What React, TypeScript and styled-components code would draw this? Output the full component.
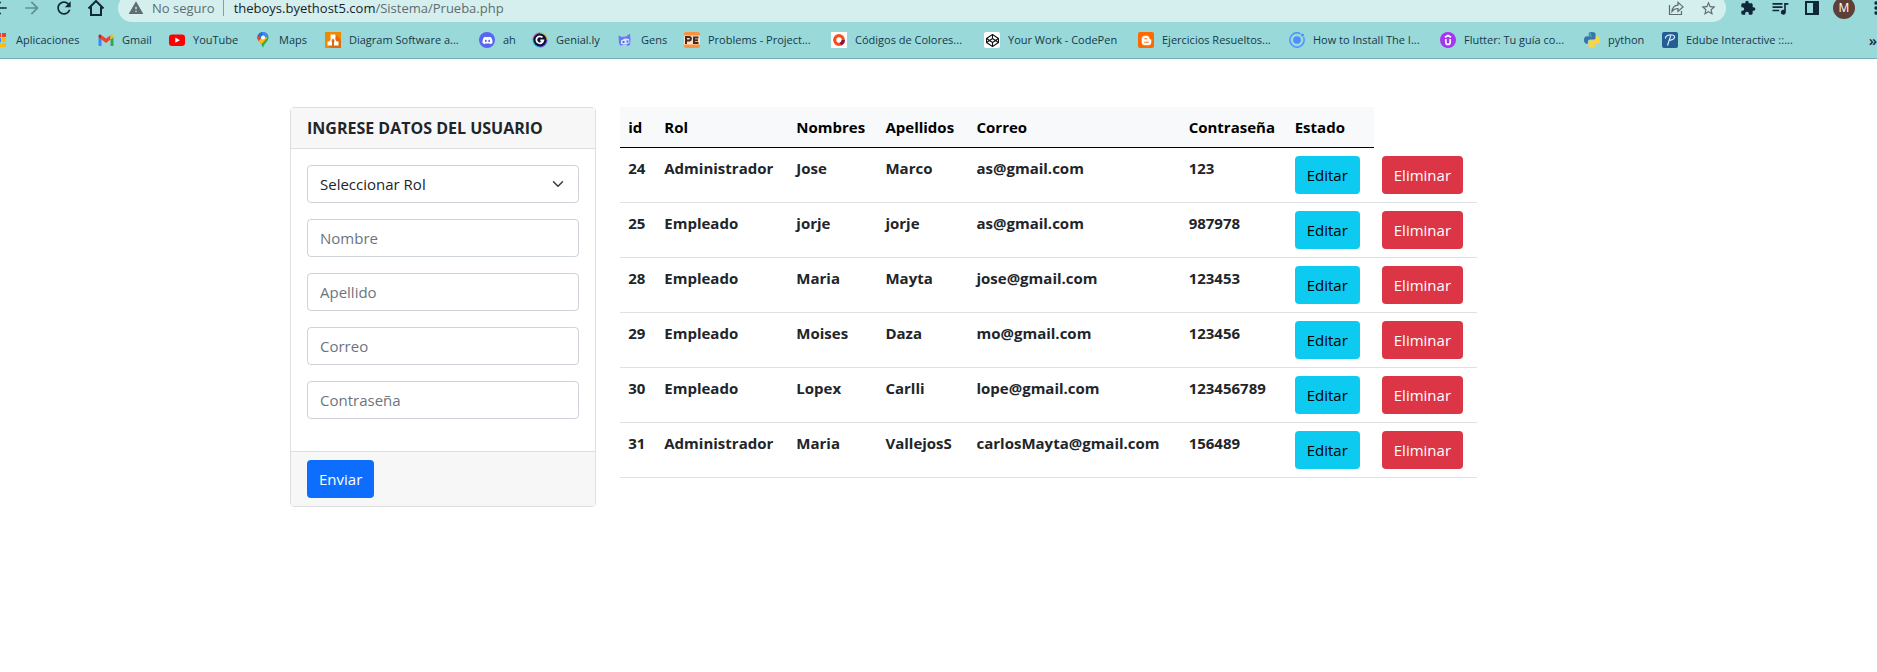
import React from 'react';
import styled, { createGlobalStyle } from 'styled-components';
import { FaDiscord, FaCodepen, FaBloggerB } from 'react-icons/fa';

const GlobalStyle = createGlobalStyle`
  *, *::before, *::after { box-sizing: border-box; }
  body {
    margin: 0;
    background: #fff;
    color: #212529;
    font-family: "Open Sans", "Noto Sans", sans-serif;
    font-size: 15px;
    line-height: 24px;
    overflow-x: hidden;
  }
  button, input, select { font: inherit; }
`;

/* ---------- browser bars ---------- */

const Chrome = styled.header`
  background: #9ad9d9;
  border-bottom: 1px solid #74b0b4;
  overflow: hidden;
`;

const Toolbar = styled.div`
  display: flex;
  align-items: center;
  height: 28px;
  margin: -6px -15px 0 -16px;
`;

const IconButton = styled.button<{ $dim?: boolean }>`
  display: flex;
  align-items: center;
  justify-content: center;
  flex: none;
  width: 32px;
  height: 28px;
  padding: 0;
  border: 0;
  background: none;
  color: ${(p) => (p.$dim ? '#5f9095' : '#10273a')};
`;

const AddressBar = styled.div`
  display: flex;
  align-items: center;
  flex: 1;
  height: 28px;
  margin: 0 6px;
  padding: 0 2px 0 10px;
  border-radius: 14px;
  background: #d4efee;
  color: #5d6d70;
  font-size: 13px;
  line-height: 16px;
  & > button { color: #5d6d70; }
`;

const Security = styled.span`
  padding: 0 8px;
`;

const Divider = styled.span`
  width: 1px;
  height: 16px;
  margin-right: 10px;
  background: #8b9c9e;
`;

const Url = styled.span`
  flex: 1;
`;

const Host = styled.span`
  color: #14232a;
`;

const Avatar = styled.span`
  display: flex;
  align-items: center;
  justify-content: center;
  width: 22px;
  height: 22px;
  border-radius: 50%;
  background: #5d4037;
  color: #fff;
  font-size: 12px;
  line-height: 16px;
`;

const Bookmarks = styled.nav`
  display: flex;
  align-items: center;
  height: 36px;
  margin-left: -8px;
  font-size: 11px;
  line-height: 16px;
`;

const Bookmark = styled.a<{ $width: number }>`
  display: flex;
  align-items: center;
  gap: 8px;
  flex: none;
  width: ${(p) => p.$width}px;
  color: #14384a;
  text-decoration: none;
  white-space: nowrap;
`;

const More = styled.button`
  flex: none;
  width: 16px;
  margin-left: auto;
  padding: 0;
  border: 0;
  background: none;
  color: #10273a;
  font-size: 15px;
  font-weight: 600;
  text-align: right;
`;

/* ---------- page ---------- */

const Container = styled.main`
  display: grid;
  grid-template-columns: 3fr 8fr 1fr;
  max-width: 1321px;
  margin: 48px auto 0;
`;

const Column = styled.div`
  min-width: 0;
  padding: 0 12px;
`;

const Card = styled.form`
  border: 1px solid #dfdfdf;
  border-radius: 4px;
`;

const CardHeader = styled.h1`
  margin: 0;
  padding: 8px 16px;
  border-bottom: 1px solid #dfdfdf;
  background: #f7f7f7;
  font-size: 16px;
  font-weight: 700;
  line-height: 24px;
`;

const CardBody = styled.div`
  display: grid;
  gap: 16px;
  padding: 16px 16px 32px;
`;

const CardFooter = styled.div`
  padding: 8px 16px;
  border-top: 1px solid #dfdfdf;
  background: #f7f7f7;
`;

const Field = styled.input`
  width: 100%;
  height: 38px;
  padding: 6px 12px;
  border: 1px solid #ced4da;
  border-radius: 4px;
  background: #fff;
  color: #212529;
  &::placeholder { color: #6c757d; opacity: 1; }
`;

const SelectBox = styled.div`
  display: grid;
  align-items: center;
  & > * { grid-area: 1 / 1; }
  & > svg { justify-self: end; margin-right: 13px; pointer-events: none; }
`;

const Select = styled(Field).attrs({ as: 'select' })`
  appearance: none;
`;

const tones = {
  primary: ['#0d6efd', '#fff'],
  info: ['#0dcaf0', '#000'],
  danger: ['#dc3545', '#fff'],
};

const Button = styled.button<{ $tone: keyof typeof tones }>`
  display: block;
  height: 38px;
  padding: 0 12px;
  border: 0;
  border-radius: 4px;
  background: ${(p) => tones[p.$tone][0]};
  color: ${(p) => tones[p.$tone][1]};
`;

const Table = styled.table`
  width: 100%;
  table-layout: fixed;
  border-collapse: separate;
  border-spacing: 0;
  text-align: left;
`;

const Col = styled.col<{ $width: number }>`
  width: ${(p) => p.$width}px;
`;

const HeadCell = styled.th`
  padding: 8px;
  border-bottom: 1px solid #000;
  background: #f8f9fa;
  color: #000;
`;

const Cell = styled.td`
  padding: 8px;
  border-bottom: 1px solid #dee2e6;
  font-weight: 700;
  vertical-align: top;
  white-space: nowrap;
  & > button { font-weight: 400; }
`;

/* ---------- icons ---------- */

const Glyph = ({ d, size = 20 }: { d: string; size?: number }) => (
  <svg width={size} height={size} viewBox="0 0 24 24" fill="currentColor"><path d={d} /></svg>
);

const Icon16 = ({ children }: { children: React.ReactNode }) => (
  <svg width="16" height="16" viewBox="0 0 16 16" fill="none">{children}</svg>
);

const HomeIcon = () => (
  <svg width="18" height="18" viewBox="0 0 18 18" fill="none" stroke="currentColor" strokeWidth="2">
    <path d="M1.500 9.500 9 2l7.500 7.500M4 8v8h10V8" />
  </svg>
);

const ShareIcon = () => (
  <svg width="16" height="16" viewBox="0 0 16 16" fill="none" stroke="currentColor" strokeWidth="1.200">
    <path d="M1.500 5v9.500h12V11" />
    <path d="M4 11.500C4.300 7.500 6.500 5.300 10 5.100V2.300l5 4.600-5 4.500V8.500c-2.700 0-4.500.900-6 3Z" />
  </svg>
);

const PanelIcon = () => (
  <svg width="14" height="14" viewBox="0 0 14 14"><path fill="currentColor" fillRule="evenodd" d="M0 0h14v14H0zM2 2v10h6V2z" /></svg>
);

const Chevron = () => (
  <svg width="16" height="12" viewBox="0 0 16 16" fill="none" stroke="#343a40" strokeWidth="2" strokeLinecap="round" strokeLinejoin="round">
    <path d="m2 5 6 6 6-6" />
  </svg>
);

const AppsIcon = () => (
  <Icon16>
    {['#4285f4', '#ea4335', '#ea4335', '#34a853', '#4285f4', '#fbbc04', '#34a853', '#fbbc04', '#fbbc04'].map((c, i) => (
      <rect key={i} x={Math.floor(i % 3) * 5} y={1 + Math.floor(i / 3) * 5} width="4" height="4" fill={c} />
    ))}
  </Icon16>
);

const GmailIcon = () => (
  <Icon16>
    <path fill="#4285f4" d="M1 14h2.500V7.500L.500 5.200V13c0 .600.300 1 .500 1Z" />
    <path fill="#34a853" d="M12.500 14H15c.400 0 .500-.500.500-1V5.200l-3 2.300Z" />
    <path fill="#ea4335" d="M3.500 7.500V3.200L8 6.600l4.500-3.400v4.300L8 11Z" />
    <path fill="#fbbc04" d="M12.500 3.200v4.300l3-2.300V4c0-1.600-1.700-2.100-3-.800Z" />
    <path fill="#c5221f" d="M.500 4v1.200l3 2.300V3.200C2.200 1.900.500 2.400.500 4Z" />
  </Icon16>
);

const YouTubeIcon = () => (
  <Icon16>
    <rect y="2.500" width="16" height="11.500" rx="3" fill="#f00" />
    <path d="m6.300 5.600 4.600 2.600-4.600 2.600Z" fill="#fff" />
  </Icon16>
);

const MapsIcon = () => (
  <Icon16>
    <clipPath id="pin"><path d="M8 0C4.800 0 2.500 2.400 2.500 5.500c0 4 4.200 5.300 5.500 10.500 1.300-5.200 5.500-6.500 5.500-10.500C13.500 2.400 11.200 0 8 0Z" /></clipPath>
    <g clipPath="url(#pin)">
      <path fill="#34a853" d="M0 0h16v16H0z" />
      <path fill="#fbbc04" d="M0 11 9.500 0 12 6 5 14Z" />
      <path fill="#1a73e8" d="M0 0h8L8 4 3 9.500H0Z" />
      <path fill="#ea4335" d="M2 2 6 6l-3.500 4L0 7Z" />
      <path fill="#4285f4" d="M7 0h8v3L9 6Z" />
    </g>
    <circle cx="8" cy="5.500" r="2" fill="#fff" />
  </Icon16>
);

const DiagramIcon = () => (
  <Icon16>
    <path fill="#f08705" d="M0 0h16v16H0z" />
    <path fill="#df6c0c" d="m10 2 6 6v8H6l-3-3Z" />
    <path d="M8 4.500 4.500 11M8 4.500l3.500 6.500" stroke="#fff" strokeWidth="1.500" />
    <path fill="#fff" d="M5.500 2.500h5v4h-5zM2.500 9.500H7v4H2.500zM9 9.500h4.500v4H9z" />
  </Icon16>
);

const Tile = styled.span<{ $bg: string; $fg: string; $round?: boolean }>`
  display: flex;
  align-items: center;
  justify-content: center;
  width: 16px;
  height: 16px;
  border-radius: ${(p) => (p.$round ? '50%' : '2px')};
  background: ${(p) => p.$bg};
  color: ${(p) => p.$fg};
`;

const GeniallyIcon = () => (
  <Icon16>
    <circle cx="8" cy="8" r="7.500" fill="#1fb5d8" />
    <path d="M8 8V.500A7.500 7.500 0 0 1 15.500 8Z" fill="#f9b52c" />
    <path d="M8 8h7.500A7.500 7.500 0 0 1 8 15.500Z" fill="#7b5cf0" />
    <path d="M.500 8A7.500 7.500 0 0 1 8 .500V8Z" fill="#d94b9b" />
    <circle cx="8" cy="8" r="6.500" fill="#0b1135" />
    <path d="M10.500 5.500A3.500 3.500 0 1 0 11.300 8.500H8.300" stroke="#fff" strokeWidth="1.800" />
  </Icon16>
);

const GensIcon = () => (
  <Icon16>
    <path fill="#6a78f5" d="M1.500 3.500 5 5l4-.500L13 1.500l.500 6L13 13l-2.500 1-1-1.500H6l-2.500 1.500L2 11Z" />
    <path fill="#dce4ff" d="m4 8.500 4-2 4 .500.500 4-4 1.500-4.500-.500Z" />
    <path fill="#5865f2" d="M5.500 9h2v2h-2zM9.500 8.500h2v2h-2z" />
  </Icon16>
);

const ProblemsIcon = () => (
  <Icon16>
    <rect width="16" height="16" rx="2" fill="#f9923e" />
    <path fill="#f3e3cf" d="M0 3.500h16v9H0z" />
    <path d="M2 12V5h3.200c2.200 0 2.200 3.500 0 3.500H2.500M14.500 5.500H10v5.500h4.500M10 8.200h4" stroke="#4b2a1c" strokeWidth="2" />
  </Icon16>
);

const CodigosIcon = () => (
  <Icon16>
    <path fill="#fff" d="M0 0h16v16H0z" />
    <circle cx="8" cy="8" r="4.300" stroke="#f4511e" strokeWidth="3.200" />
    <path d="M12.300 8A4.300 4.300 0 0 1 9.500 12" stroke="#8e1440" strokeWidth="3.200" />
  </Icon16>
);

const IonicIcon = () => (
  <Icon16>
    <circle cx="8" cy="8" r="7.200" stroke="#4c8dff" strokeWidth="1.400" />
    <circle cx="8" cy="8" r="3.800" fill="#4c8dff" />
    <circle cx="13.500" cy="3" r="2.400" fill="#9ad9d9" />
    <circle cx="13.500" cy="3" r="1.500" fill="#4c8dff" />
  </Icon16>
);

const UdemyIcon = () => (
  <Icon16>
    <circle cx="8" cy="8" r="8" fill="#a435f0" />
    <path d="M5.800 7v3.200c0 3 4.400 3 4.400 0V7M5 5.200l3-1.800 3 1.800" stroke="#fff" strokeWidth="1.700" />
  </Icon16>
);

const PythonIcon = () => (
  <Icon16>
    <path fill="#3776ab" d="M8 0C4.500 0 4.700 1.500 4.700 2.200v1.500H8.200v.600H2.600C1.200 4.300 0 5.500 0 8.100s1.200 3.600 2.500 3.600h1.400V9.800c0-1.300 1-2.200 2.200-2.200h3.500c1.100 0 1.900-.900 1.900-1.900V2.200C11.500.900 10.300 0 8 0ZM6.200 1.200a.700.700 0 1 1 0 1.400.700.700 0 0 1 0-1.400Z" />
    <path fill="#ffd43b" d="M8 16c3.500 0 3.300-1.500 3.300-2.200v-1.500H7.800v-.600h5.600c1.400 0 2.600-1.200 2.600-3.800s-1.200-3.600-2.500-3.600h-1.400v1.900c0 1.300-1 2.200-2.200 2.200H6.400c-1.100 0-1.900.900-1.900 1.900v3.500C4.500 15.100 5.700 16 8 16Zm1.800-1.200a.700.700 0 1 1 0-1.400.700.700 0 0 1 0 1.400Z" />
  </Icon16>
);

const EdubeIcon = () => (
  <Icon16>
    <rect width="16" height="16" rx="2" fill="#235d93" />
    <path d="M3.500 6.500C3 3.500 7 2.800 10 3c4 .300 3.200 4.500-1.500 5.200M8.800 3.500 5.500 13.500M6.500 8.500l2.500-.300" stroke="#dcecf8" strokeWidth="1.200" />
  </Icon16>
);

const discord = <Tile $round $bg="#5865f2" $fg="#fff"><FaDiscord size={11} /></Tile>;
const codepen = <Tile $bg="#fff" $fg="#111"><FaCodepen size={13} /></Tile>;
const blogger = <Tile $bg="#ff6a00" $fg="#fff"><FaBloggerB size={11} /></Tile>;

/* ---------- data ---------- */

const bookmarks: [string, number, React.ReactNode][] = [
  ['Aplicaciones', 106, <AppsIcon />],
  ['Gmail', 71, <GmailIcon />],
  ['YouTube', 86, <YouTubeIcon />],
  ['Maps', 70, <MapsIcon />],
  ['Diagram Software a...', 154, <DiagramIcon />],
  ['ah', 53, discord],
  ['Genial.ly', 85, <GeniallyIcon />],
  ['Gens', 67, <GensIcon />],
  ['Problems - Project...', 147, <ProblemsIcon />],
  ['Códigos de Colores...', 153, <CodigosIcon />],
  ['Your Work - CodePen', 154, codepen],
  ['Ejercicios Resueltos...', 151, blogger],
  ['How to Install The I...', 151, <IonicIcon />],
  ['Flutter: Tu guía co...', 144, <UdemyIcon />],
  ['python', 78, <PythonIcon />],
  ['Edube Interactive ::...', 150, <EdubeIcon />],
];

const headings = ['id', 'Rol', 'Nombres', 'Apellidos', 'Correo', 'Contraseña', 'Estado'];
const columnWidths = [36, 132, 89, 91, 212, 106, 87, 103];

const users = [
  ['24', 'Administrador', 'Jose', 'Marco', 'as@gmail.com', '123'],
  ['25', 'Empleado', 'jorje', 'jorje', 'as@gmail.com', '987978'],
  ['28', 'Empleado', 'Maria', 'Mayta', 'jose@gmail.com', '123453'],
  ['29', 'Empleado', 'Moises', 'Daza', 'mo@gmail.com', '123456'],
  ['30', 'Empleado', 'Lopex', 'Carlli', 'lope@gmail.com', '123456789'],
  ['31', 'Administrador', 'Maria', 'VallejosS', 'carlosMayta@gmail.com', '156489'],
];

export default function App() {
  return (
    <>
      <GlobalStyle />
      <Chrome>
        <Toolbar>
          <IconButton aria-label="Atrás"><Glyph d="M20 11H7.830l5.590-5.590L12 4l-8 8 8 8 1.410-1.410L7.830 13H20v-2z" /></IconButton>
          <IconButton aria-label="Adelante" $dim><Glyph d="M12 4l-1.410 1.410L16.170 11H4v2h12.170l-5.580 5.590L12 20l8-8z" /></IconButton>
          <IconButton aria-label="Recargar"><Glyph d="M17.650 6.350C16.200 4.900 14.210 4 12 4c-4.420 0-7.990 3.580-7.990 8s3.570 8 7.990 8c3.730 0 6.840-2.550 7.730-6h-2.080c-.820 2.330-3.040 4-5.650 4-3.310 0-6-2.690-6-6s2.690-6 6-6c1.660 0 3.140.690 4.220 1.780L13 11h7V4l-2.350 2.350z" /></IconButton>
          <IconButton aria-label="Inicio"><HomeIcon /></IconButton>
          <AddressBar>
            <Glyph size={16} d="M1 21h22L12 2 1 21zm12-3h-2v-2h2v2zm0-4h-2v-4h2v4z" />
            <Security>No seguro</Security>
            <Divider />
            <Url><Host>theboys.byethost5.com</Host>/Sistema/Prueba.php</Url>
            <IconButton aria-label="Compartir"><ShareIcon /></IconButton>
            <IconButton aria-label="Añadir a marcadores"><Glyph size={17} d="M22 9.240l-7.190-.620L12 2 9.190 8.630 2 9.240l5.460 4.730L5.820 21 12 17.270 18.180 21l-1.630-7.030L22 9.240zM12 15.400l-3.760 2.270 1-4.280-3.320-2.880 4.380-.380L12 6.100l1.710 4.040 4.380.380-3.320 2.880 1 4.280L12 15.400z" /></IconButton>
          </AddressBar>
          <IconButton aria-label="Extensiones"><Glyph size={16} d="M20.500 11H19V7c0-1.100-.900-2-2-2h-4V3.500C13 2.120 11.880 1 10.500 1S8 2.120 8 3.500V5H4c-1.100 0-1.990.900-1.990 2v3.800H3.500c1.490 0 2.700 1.210 2.700 2.700s-1.210 2.700-2.700 2.700H2V20c0 1.100.900 2 2 2h3.800v-1.500c0-1.490 1.210-2.700 2.700-2.700 1.490 0 2.700 1.210 2.700 2.700V22H17c1.100 0 2-.900 2-2v-4h1.500c1.380 0 2.500-1.120 2.500-2.500S21.880 11 20.500 11z" /></IconButton>
          <IconButton aria-label="Multimedia"><Glyph d="M15 6H3v2h12V6zm0 4H3v2h12v-2zM3 16h8v-2H3v2zM17 6v8.180c-.310-.110-.650-.180-1-.180-1.660 0-3 1.340-3 3s1.340 3 3 3 3-1.340 3-3V8h3V6h-5z" /></IconButton>
          <IconButton aria-label="Panel lateral"><PanelIcon /></IconButton>
          <IconButton aria-label="Perfil"><Avatar>M</Avatar></IconButton>
          <IconButton aria-label="Menú"><Glyph d="M12 8a2 2 0 1 0 0-4 2 2 0 0 0 0 4zm0 2a2 2 0 1 0 0 4 2 2 0 0 0 0-4zm0 6a2 2 0 1 0 0 4 2 2 0 0 0 0-4z" /></IconButton>
        </Toolbar>
        <Bookmarks>
          {bookmarks.map(([label, width, icon]) => (
            <Bookmark key={label} href="#" $width={width}>{icon}{label}</Bookmark>
          ))}
          <More aria-label="Más marcadores">»</More>
        </Bookmarks>
      </Chrome>

      <Container>
        <Column>
          <Card onSubmit={(e: React.FormEvent) => e.preventDefault()}>
            <CardHeader>INGRESE DATOS DEL USUARIO</CardHeader>
            <CardBody>
              <SelectBox>
                <Select aria-label="Rol">
                  <option>Seleccionar Rol</option>
                  <option>Administrador</option>
                  <option>Empleado</option>
                </Select>
                <Chevron />
              </SelectBox>
              <Field aria-label="Nombre" placeholder="Nombre" />
              <Field aria-label="Apellido" placeholder="Apellido" />
              <Field aria-label="Correo" placeholder="Correo" />
              <Field aria-label="Contraseña" placeholder="Contraseña" />
            </CardBody>
            <CardFooter><Button $tone="primary">Enviar</Button></CardFooter>
          </Card>
        </Column>
        <Column>
          <Table>
            <colgroup>{columnWidths.map((w, i) => <Col key={i} $width={w} />)}</colgroup>
            <thead>
              <tr>{headings.map((h) => <HeadCell key={h} scope="col">{h}</HeadCell>)}</tr>
            </thead>
            <tbody>
              {users.map((user) => (
                <tr key={user[0]}>
                  {user.map((value, i) => <Cell key={i}>{value}</Cell>)}
                  <Cell><Button type="button" $tone="info">Editar</Button></Cell>
                  <Cell><Button type="button" $tone="danger">Eliminar</Button></Cell>
                </tr>
              ))}
            </tbody>
          </Table>
        </Column>
      </Container>
    </>
  );
}
